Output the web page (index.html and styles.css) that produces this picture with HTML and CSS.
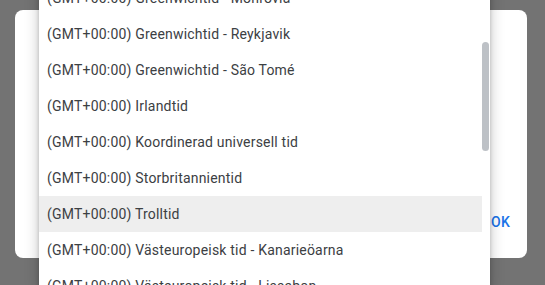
FILE: index.html
```html
<!DOCTYPE html>
<html lang="sv">
<head>
<meta charset="utf-8">
<link rel="stylesheet" href="styles.css">
</head>
<body>
<div class="dialog">
  <div class="dialog-body"></div>
  <div class="dialog-actions">
    <button class="btn">Avbryt</button>
    <button class="btn">OK</button>
  </div>
</div>
<div class="dropdown">
  <ul class="list">
    <li class="item">(GMT+00:00) Greenwichtid - Monrovia</li>
    <li class="item">(GMT+00:00) Greenwichtid - Reykjavik</li>
    <li class="item">(GMT+00:00) Greenwichtid - São Tomé</li>
    <li class="item">(GMT+00:00) Irlandtid</li>
    <li class="item">(GMT+00:00) Koordinerad universell tid</li>
    <li class="item">(GMT+00:00) Storbritannientid</li>
    <li class="item item-hover">(GMT+00:00) Trolltid</li>
    <li class="item">(GMT+00:00) Västeuropeisk tid - Kanarieöarna</li>
    <li class="item">(GMT+00:00) Västeuropeisk tid - Lissabon</li>
  </ul>
  <div class="scrollbar"><div class="thumb"></div></div>
</div>
</body>
</html>
```
FILE: styles.css
```css
html, body {
  margin: 0;
  height: 100%;
}
body {
  background: #737373;
  overflow: hidden;
  position: relative;
  padding: 10px 18px 0 15px;
  box-sizing: border-box;
  font-family: Roboto, "Noto Sans", Arial, sans-serif;
}
.dialog {
  width: 512px;
  height: 248px;
  background: #fff;
  border-radius: 8px;
  display: flex;
  flex-direction: column;
}
.dialog-body {
  flex: 1;
}
.dialog-actions {
  display: flex;
  justify-content: flex-end;
  gap: 8px;
  padding: 0 9px 18px 0;
}
.btn {
  border: 0;
  background: transparent;
  font-family: Roboto, Arial, sans-serif;
  font-weight: 500;
  font-size: 14px;
  letter-spacing: 0.25px;
  color: #1a73e8;
  height: 36px;
  padding: 0 8px;
}
.dropdown {
  position: absolute;
  left: 39px;
  top: -20px;
  width: 451px;
  height: 305px;
  overflow: hidden;
  background: #fff;
  box-shadow: 0 2px 4px rgba(0,0,0,0.2), 0 4px 12px 2px rgba(0,0,0,0.18);
  display: flex;
}
.list {
  list-style: none;
  margin: 0;
  padding: 0;
  flex: 1;
}
.item {
  height: 36px;
  line-height: 36px;
  padding-left: 8px;
  font-size: 14px;
  letter-spacing: 0.2px;
  color: #3c4043;
  white-space: nowrap;
}
.item-hover {
  background: #eeeeee;
}
.scrollbar {
  width: 8px;
  padding-top: 62px;
}
.thumb {
  width: 7px;
  height: 109px;
  background: #bdc1c6;
  border-radius: 4px;
}
```
